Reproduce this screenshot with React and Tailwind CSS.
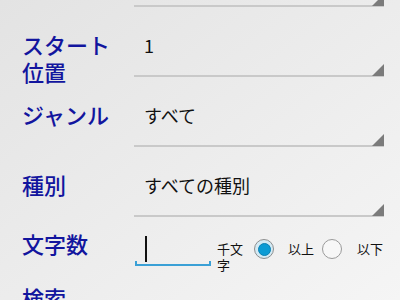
import React from 'react'

const LABEL = "text-[22px] leading-[27px] font-medium text-[#12159e]"

function Spinner({ value }) {
  return (
    <div className="relative flex h-full w-[250px] flex-col">
      <div className="flex-1 pl-[10px] pt-[26px] text-[18px] leading-[24px] text-[#111]">{value}</div>
      <div className="h-[2px] bg-[#c9c9c9]" />
      {/* corner arrow of the spinner */}
      <svg className="absolute bottom-[1px] right-0" width="12" height="12" viewBox="0 0 12 12">
        <polygon points="12,0 12,12 0,12" fill="#7b7b7b" />
      </svg>
    </div>
  )
}

function Row({ label, children, className = 'h-[70px]', labelPad = 'pt-[24px]' }) {
  return (
    <div className={`flex ${className}`}>
      <div className={`w-[134px] shrink-0 pl-[22px] ${labelPad} ${LABEL}`}>{label}</div>
      {children}
    </div>
  )
}

function Radio({ checked }) {
  if (checked) {
    return (
      <span className="flex h-[20px] w-[20px] shrink-0 items-center justify-center rounded-full border border-[#8e8e8e] bg-[#d3eaf4]">
        <span className="h-[13px] w-[13px] rounded-full border border-[#0a80b2] bg-[#0b9bd4]" />
      </span>
    )
  }
  return <span className="block h-[20px] w-[20px] shrink-0 rounded-full border border-[#9a9a9a] bg-[#f7f7f7]" />
}

export default function App() {
  return (
    <div className="h-[300px] w-[400px] overflow-hidden bg-gradient-to-br from-[#e3e3e3] to-[#f5f5f5] font-['Noto_Sans_CJK_JP',sans-serif]">
      <Row label="" className="-mt-[63px] h-[70px]">
        <Spinner value="" />
      </Row>
      <Row label={<>スタート<br />位置</>}>
        <Spinner value="1" />
      </Row>
      <Row label="ジャンル">
        <Spinner value="すべて" />
      </Row>
      <Row label="種別">
        <Spinner value="すべての種別" />
      </Row>
      <Row label="文字数" className="h-[67px]" labelPad="pt-[13px]">
        <div className="flex items-start">
          <div className="relative ml-[1px] mt-[17px] h-[32px] w-[76px]">
            <div className="absolute left-[10px] top-[2px] h-[26px] w-[1.5px] bg-[#111]" />
            <div className="absolute bottom-0 left-0 right-0 h-[5px] border-x-2 border-b-2 border-[#3aa0d6]" />
          </div>
          <div className="ml-[6px] mt-[24px] w-[28px] text-[13px] leading-[16px] text-[#111]">千文字</div>
          <div className="ml-[9px] mt-[22px] flex items-center text-[13px] leading-[20px] text-[#111]">
            <Radio checked />
            <span className="ml-[14px]">以上</span>
            <span className="ml-[8px]"><Radio /></span>
            <span className="ml-[15px]">以下</span>
          </div>
        </div>
      </Row>
      <Row label="検索" labelPad="pt-0" />
    </div>
  )
}
